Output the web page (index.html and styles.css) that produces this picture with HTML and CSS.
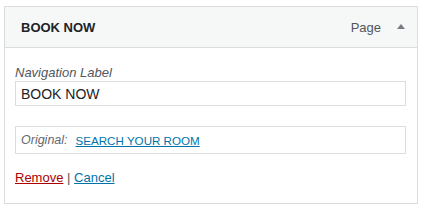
FILE: index.html
```html
<!DOCTYPE html>
<html lang="en">
<head>
    <meta charset="UTF-8">
    <title>Menu Item</title>
    <link rel="stylesheet" href="styles.css">
</head>
<body>

<div class="menu-item">
    <!-- Item bar -->
    <div class="item-bar">
        <span class="item-title">BOOK NOW</span>
        <span class="item-controls">
            <span class="item-type">Page</span>
            <span class="item-toggle"></span>
        </span>
    </div>

    <!-- Settings -->
    <div class="item-settings">
        <label class="field-label" for="nav_label">Navigation Label</label>
        <input type="text" id="nav_label" class="field-input" value="BOOK NOW">

        <div class="link-original">
            <span class="original-label">Original:</span>
            <a href="#">SEARCH YOUR ROOM</a>
        </div>

        <div class="item-actions">
            <a href="#" class="remove">Remove</a> <span class="sep">|</span> <a href="#" class="cancel">Cancel</a>
        </div>
    </div>
</div>

</body>
</html>
```

FILE: styles.css
```css
body {
    font-family: 'Liberation Sans', Arial, sans-serif;
    font-size: 13px;
    color: #1d2327;
    background-color: #fff;
    margin: 0;
    padding: 6px 0 0 4px;
}

.menu-item {
    width: 412px;
    border: 1px solid #dcdcde;
}

.item-bar {
    display: flex;
    align-items: center;
    justify-content: space-between;
    height: 40px;
    padding: 0 12px 0 16px;
    background-color: #f6f7f7;
    border-bottom: 1px solid #dcdcde;
}

.item-title {
    font-weight: bold;
    font-size: 13px;
}

.item-controls {
    display: flex;
    align-items: center;
    gap: 16px;
}

.item-type {
    color: #50575e;
}

.item-toggle {
    width: 0;
    height: 0;
    border-left: 4px solid transparent;
    border-right: 4px solid transparent;
    border-bottom: 5px solid #787c82;
    margin-bottom: 2px;
}

.item-settings {
    padding: 17px 11px 16px 10px;
}

.field-label {
    display: block;
    font-style: italic;
    color: #50575e;
    line-height: 16px;
}

.field-input {
    display: block;
    box-sizing: border-box;
    width: 100%;
    height: 25px;
    margin: 0;
    padding: 0 5px;
    border: 1px solid #dcdcde;
    border-radius: 0;
    font-family: 'Liberation Sans', Arial, sans-serif;
    font-size: 14px;
    color: #1d2327;
    outline: none;
}

.link-original {
    box-sizing: border-box;
    height: 28px;
    margin-top: 20px;
    padding: 0 5px;
    border: 1px solid #dcdcde;
    display: flex;
    align-items: center;
    gap: 8px;
}

.original-label {
    font-style: italic;
    color: #646970;
    font-size: 12.5px;
}

.link-original a {
    color: #0073aa;
    font-size: 11.6px;
}

.item-actions {
    margin-top: 15px;
    line-height: 18px;
}

.item-actions .remove {
    color: #a00;
}

.item-actions .cancel {
    color: #0073aa;
}

.sep {
    color: #50575e;
}
```
